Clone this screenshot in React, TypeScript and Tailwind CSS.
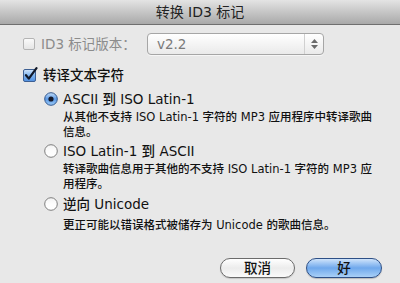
import React from "react";

const font = "font-['DejaVu_Sans','Noto_Sans_CJK_SC',sans-serif]";

function CheckboxOff() {
  return (
    <svg width="12" height="12" viewBox="0 0 12 12" className="shrink-0">
      <defs>
        <linearGradient id="cbo" x1="0" y1="0" x2="0" y2="1">
          <stop offset="0" stopColor="#fbfbfb" />
          <stop offset="1" stopColor="#e4e4e4" />
        </linearGradient>
      </defs>
      <rect x="0.5" y="0.5" width="11" height="11" rx="1.5" fill="url(#cbo)" stroke="#b4b4b4" />
    </svg>
  );
}

function CheckboxOn() {
  return (
    <svg width="15" height="15" viewBox="0 0 15 15" className="shrink-0 -mt-[2px]">
      <defs>
        <linearGradient id="cbn" x1="0" y1="0" x2="0" y2="1">
          <stop offset="0" stopColor="#d2e6fb" />
          <stop offset="0.5" stopColor="#7fb4ee" />
          <stop offset="1" stopColor="#4f8fe0" />
        </linearGradient>
      </defs>
      <rect x="0.5" y="2.5" width="12" height="12" rx="1.5" fill="url(#cbn)" stroke="#3d5f92" />
      <path d="M3 8.2 L5.8 11.6 L13.5 1.2" fill="none" stroke="#101828" strokeWidth="2.2" strokeLinecap="round" strokeLinejoin="round" />
    </svg>
  );
}

function RadioOn() {
  return (
    <svg width="14" height="14" viewBox="0 0 14 14" className="shrink-0">
      <defs>
        <linearGradient id="ron" x1="0" y1="0" x2="0" y2="1">
          <stop offset="0" stopColor="#c4def9" />
          <stop offset="0.5" stopColor="#5c9ae6" />
          <stop offset="1" stopColor="#9ccaf6" />
        </linearGradient>
      </defs>
      <circle cx="7" cy="7" r="6.3" fill="url(#ron)" stroke="#34598f" strokeWidth="1" />
      <circle cx="7" cy="7" r="2.6" fill="#15192a" />
    </svg>
  );
}

function RadioOff() {
  return (
    <svg width="14" height="14" viewBox="0 0 14 14" className="shrink-0">
      <defs>
        <linearGradient id="rof" x1="0" y1="0" x2="0" y2="1">
          <stop offset="0" stopColor="#f2f2f2" />
          <stop offset="0.5" stopColor="#fdfdfd" />
          <stop offset="1" stopColor="#ffffff" />
        </linearGradient>
      </defs>
      <circle cx="7" cy="7" r="6.3" fill="url(#rof)" stroke="#7e7e7e" strokeWidth="1" />
    </svg>
  );
}

export default function App() {
  return (
    <div className={`${font} w-[400px] h-[283px] bg-[#e8e8e8] flex flex-col text-[#111] overflow-hidden`}>
      <div className="h-[25px] shrink-0 bg-gradient-to-b from-[#e4e4e4] to-[#a9a9a9] border-b border-[#6f6f6f] flex items-center justify-center text-[14px] text-[#222]">
        转换 ID3 标记
      </div>

      <div className="pl-[23px] flex flex-col">
        <div className="mt-[8px] h-[22px] flex items-center">
          <div className="w-[124px] flex items-center gap-[6px] text-[13.5px] text-[#8c8c8c]">
            <CheckboxOff />
            <span>ID3 标记版本：</span>
          </div>
          <div className="w-[177px] h-[22px] rounded-[4px] border border-[#a6a6a6] bg-gradient-to-b from-[#ffffff] to-[#eaeaea] flex items-center shadow-[0_1px_0_rgba(255,255,255,0.6)]">
            <span className="pl-[9px] text-[13.5px] text-[#7a7a7a] flex-1">v2.2</span>
            <div className="w-[19px] h-full border-l border-[#d0d0d0] flex flex-col items-center justify-center gap-[2px]">
              <svg width="7" height="4" viewBox="0 0 7 4"><path d="M0 4 L3.5 0 L7 4 Z" fill="#6a6a6a" /></svg>
              <svg width="7" height="4" viewBox="0 0 7 4"><path d="M0 0 L3.5 4 L7 0 Z" fill="#6a6a6a" /></svg>
            </div>
          </div>
        </div>

        <div className="mt-[12px] h-[16px] flex items-center gap-[5px] text-[13.5px] font-medium">
          <CheckboxOn />
          <span>转译文本字符</span>
        </div>

        <div className="pl-[21px] flex flex-col">
          <div className="mt-[8px] h-[16px] flex items-center gap-[5px] text-[13.5px] font-medium">
            <RadioOn />
            <span>ASCII 到 ISO Latin-1</span>
          </div>
          <div className="mt-[3px] pl-[19px] text-[11.5px] leading-[14.5px] font-medium">
            从其他不支持 ISO Latin-1 字符的 MP3 应用程序中转译歌曲
            <br />
            信息。
          </div>

          <div className="mt-[4px] h-[16px] flex items-center gap-[5px] text-[13.5px] font-medium">
            <RadioOff />
            <span>ISO Latin-1 到 ASCII</span>
          </div>
          <div className="mt-[3px] pl-[19px] text-[11.5px] leading-[14.5px] font-medium">
            转译歌曲信息用于其他的不支持 ISO Latin-1 字符的 MP3 应
            <br />
            用程序。
          </div>

          <div className="mt-[5px] h-[16px] flex items-center gap-[5px] text-[13.5px] font-medium">
            <RadioOff />
            <span>逆向 Unicode</span>
          </div>
          <div className="mt-[6px] pl-[19px] text-[11.5px] leading-[14.5px] font-medium">
            更正可能以错误格式被储存为 Unicode 的歌曲信息。
          </div>
        </div>
      </div>

      <div className="mt-auto mb-[5px] pr-[18px] flex justify-end gap-[11px]">
        <button className="w-[75px] h-[20px] rounded-full border border-[#6b6b6b] bg-gradient-to-b from-[#ffffff] via-[#ececec] to-[#fafafa] text-[13.5px] font-medium text-[#111] flex items-center justify-center shadow-[0_1px_1px_rgba(0,0,0,0.15)]">
          取消
        </button>
        <button className="w-[76px] h-[20px] rounded-full border border-[#2d4f86] bg-gradient-to-b from-[#cfe3fa] via-[#6fa8ec] to-[#a9d0f7] text-[13.5px] font-medium text-[#111] flex items-center justify-center shadow-[0_1px_1px_rgba(0,0,0,0.2)]">
          好
        </button>
      </div>
    </div>
  );
}
